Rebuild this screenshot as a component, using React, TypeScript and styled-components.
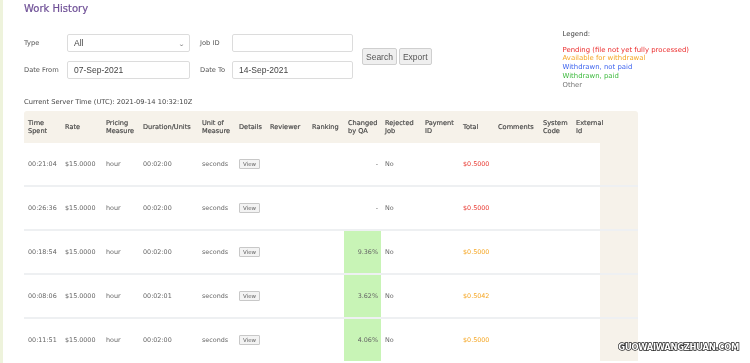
import React from 'react';
import styled, { createGlobalStyle } from 'styled-components';

const GlobalStyle = createGlobalStyle`
  html, body {
    margin: 0;
    padding: 0;
    background: #ffffff;
  }
  body {
    font-family: 'DejaVu Sans', 'Open Sans', sans-serif;
    color: #555;
    border-left: 3px solid #eef3dc;
    min-height: 363px;
    box-sizing: border-box;
    overflow: hidden;
  }
`;

const Page = styled.div`
  position: relative;
  padding: 3px 0 0 21px;
  height: 360px;
  box-sizing: border-box;
  will-change: transform;
`;

const Title = styled.h1`
  margin: 0;
  font-size: 10px;
  line-height: 12px;
  font-weight: 400;
  color: #6e4f96;
  -webkit-text-stroke: 0.2px #6e4f96;
`;

const Top = styled.div`
  display: flex;
  align-items: flex-start;
`;

const Filters = styled.div`
  display: flex;
  align-items: center;
  margin-top: 19px;
`;

const FilterGrid = styled.div`
  display: grid;
  grid-template-columns: 43px 123px 10px 32px 121px;
  grid-template-rows: 18px 18px;
  row-gap: 9px;
  align-items: center;
`;

const Label = styled.label<{ col: number }>`
  grid-column: ${({ col }) => col};
  font-size: 6.7px;
  color: #555;
  white-space: nowrap;
`;

const Field = styled.div<{ col: number }>`
  grid-column: ${({ col }) => col};
  height: 18px;
  box-sizing: border-box;
  border: 1px solid #dcdcdc;
  border-radius: 2px;
  background: #fff;
  display: flex;
  align-items: center;
  justify-content: space-between;
  padding: 0 5px 0 6px;
  font-family: 'Liberation Sans', Arial, sans-serif;
  font-size: 8.5px;
  color: #444;
`;

const Chevron = styled.span`
  font-size: 6px;
  color: #777;
  transform: scaleX(1.4);
`;

const Buttons = styled.div`
  display: flex;
  gap: 2px;
  margin-left: 9px;
`;

const Button = styled.button`
  height: 17px;
  padding: 0 3px;
  border: 1px solid #cfcfcf;
  border-radius: 2px;
  background: #efefef;
  font-family: 'Liberation Sans', Arial, sans-serif;
  font-size: 8.5px;
  color: #555;
`;

const Legend = styled.div`
  margin-left: 131px;
  margin-top: 15px;
  font-size: 6.9px;
  line-height: 8.7px;
`;

const LegendTitle = styled.div`
  color: #444;
  margin-bottom: 7px;
`;

const LegendItem = styled.div<{ color: string }>`
  color: ${({ color }) => color};
`;

const ServerTime = styled.div`
  margin-top: 9px;
  font-size: 6.7px;
  line-height: 8px;
  color: #444;
`;

const TableWrap = styled.div`
  margin-top: 5px;
  width: 614px;
  background: #f6f2ea;
  border-radius: 3px 3px 0 0;
`;

const Table = styled.table`
  width: 614px;
  table-layout: fixed;
  border-collapse: collapse;
`;

const Th = styled.th`
  height: 32px;
  padding: 0 0 0 4px;
  text-align: left;
  vertical-align: middle;
  font-size: 6.6px;
  line-height: 8.5px;
  font-weight: 400;
  color: #444;
  -webkit-text-stroke: 0.15px #444;
`;

const Row = styled.tr`
  border-top: 2px solid #eef0f2;
  &:first-child {
    border-top: none;
  }
`;

const Td = styled.td<{ align?: string; qa?: boolean; filler?: boolean }>`
  height: 42px;
  padding: 0 ${({ align }) => (align === 'right' ? '3px' : '0')} 0 4px;
  text-align: ${({ align }) => align || 'left'};
  font-size: 6.4px;
  color: #666;
  background: ${({ qa, filler }) =>
    filler ? '#f6f2ea' : qa ? '#c8f4b6' : '#ffffff'};
  white-space: nowrap;
`;

const Amount = styled.span<{ status: 'pending' | 'available' }>`
  color: ${({ status }) => (status === 'pending' ? '#e8372f' : '#f5a623')};
`;

const ViewButton = styled.span`
  display: inline-block;
  padding: 1px 3px;
  border: 1px solid #c8c8c8;
  border-radius: 1px;
  background: #f3f3f3;
  font-size: 5.5px;
  color: #666;
`;

const Watermark = styled.div`
  position: absolute;
  right: 11px;
  bottom: 8px;
  font-family: 'DejaVu Sans', sans-serif;
  font-weight: 700;
  font-size: 8.4px;
  letter-spacing: -0.3px;
  color: #ffffff;
  -webkit-text-stroke: 1.4px #222;
  paint-order: stroke fill;
`;

const columns = [
  { title: ['Time', 'Spent'], width: 37 },
  { title: ['Rate'], width: 41 },
  { title: ['Pricing', 'Measure'], width: 37 },
  { title: ['Duration/Units'], width: 59 },
  { title: ['Unit of', 'Measure'], width: 37 },
  { title: ['Details'], width: 31 },
  { title: ['Reviewer'], width: 42 },
  { title: ['Ranking'], width: 36 },
  { title: ['Changed', 'by QA'], width: 37 },
  { title: ['Rejected', 'Job'], width: 40 },
  { title: ['Payment', 'ID'], width: 38 },
  { title: ['Total'], width: 35 },
  { title: ['Comments'], width: 45 },
  { title: ['System', 'Code'], width: 33 },
  { title: ['External', 'Id'], width: 28 },
  { title: [], width: 38 },
];

interface Job {
  spent: string;
  duration: string;
  qa: string;
  total: string;
  status: 'pending' | 'available';
}

const jobs: Job[] = [
  { spent: '00:21:04', duration: '00:02:00', qa: '-', total: '$0.5000', status: 'pending' },
  { spent: '00:26:36', duration: '00:02:00', qa: '-', total: '$0.5000', status: 'pending' },
  { spent: '00:18:54', duration: '00:02:00', qa: '9.36%', total: '$0.5000', status: 'available' },
  { spent: '00:08:06', duration: '00:02:01', qa: '3.62%', total: '$0.5042', status: 'available' },
  { spent: '00:11:51', duration: '00:02:00', qa: '4.06%', total: '$0.5000', status: 'available' },
];

const legend = [
  { text: 'Pending (file not yet fully processed)', color: '#ec2b2b' },
  { text: 'Available for withdrawal', color: '#f5a623' },
  { text: 'Withdrawn, not paid', color: '#3d63ee' },
  { text: 'Withdrawn, paid', color: '#3dba3d' },
  { text: 'Other', color: '#777777' },
];

const App = () => (
  <>
    <GlobalStyle />
    <Page>
      <Title>Work History</Title>
      <Top>
        <Filters>
          <FilterGrid>
            <Label col={1}>Type</Label>
            <Field col={2}>
              All
              <Chevron>⌄</Chevron>
            </Field>
            <Label col={4}>Job ID</Label>
            <Field col={5} />
            <Label col={1}>Date From</Label>
            <Field col={2}>07-Sep-2021</Field>
            <Label col={4}>Date To</Label>
            <Field col={5}>14-Sep-2021</Field>
          </FilterGrid>
          <Buttons>
            <Button>Search</Button>
            <Button>Export</Button>
          </Buttons>
        </Filters>
        <Legend>
          <LegendTitle>Legend:</LegendTitle>
          {legend.map((item) => (
            <LegendItem key={item.text} color={item.color}>
              {item.text}
            </LegendItem>
          ))}
        </Legend>
      </Top>
      <ServerTime>Current Server Time (UTC): 2021-09-14 10:32:10Z</ServerTime>
      <TableWrap>
        <Table>
          <colgroup>
            {columns.map((c, i) => (
              <col key={i} style={{ width: c.width }} />
            ))}
          </colgroup>
          <thead>
            <tr>
              {columns.map((c, i) => (
                <Th key={i}>
                  {c.title.map((line, j) => (
                    <div key={j}>{line}</div>
                  ))}
                </Th>
              ))}
            </tr>
          </thead>
          <tbody>
            {jobs.map((job) => (
              <Row key={job.spent}>
                <Td>{job.spent}</Td>
                <Td>$15.0000</Td>
                <Td>hour</Td>
                <Td>{job.duration}</Td>
                <Td>seconds</Td>
                <Td>
                  <ViewButton>View</ViewButton>
                </Td>
                <Td />
                <Td />
                <Td align="right" qa={job.qa !== '-'}>
                  {job.qa}
                </Td>
                <Td>No</Td>
                <Td />
                <Td>
                  <Amount status={job.status}>{job.total}</Amount>
                </Td>
                <Td />
                <Td />
                <Td />
                <Td filler />
              </Row>
            ))}
          </tbody>
        </Table>
      </TableWrap>
      <Watermark>GUOWAIWANGZHUAN.COM</Watermark>
    </Page>
  </>
);

export default App;
